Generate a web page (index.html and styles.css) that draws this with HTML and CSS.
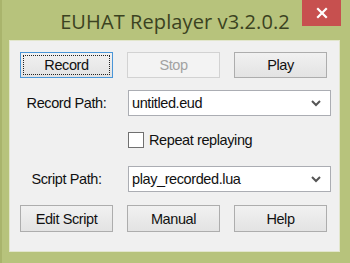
FILE: index.html
```html
<!DOCTYPE html>
<html>
<head>
<meta charset="utf-8">
<link rel="stylesheet" href="styles.css">
</head>
<body>
<div class="window">
  <div class="titlebar">
    <span class="title">EUHAT Replayer v3.2.0.2</span>
    <div class="close"><svg width="14" height="14" viewBox="0 0 14 14"><path d="M3 3 L11 11 M11 3 L3 11" stroke="#fff" stroke-width="2.2" stroke-linecap="square"/></svg></div>
  </div>
  <div class="client">
    <div class="row buttons top">
      <button class="btn focused"><span class="focus">Record</span></button>
      <button class="btn disabled">Stop</button>
      <button class="btn">Play</button>
    </div>
    <div class="row field">
      <span class="label">Record Path:</span>
      <div class="combo"><span>untitled.eud</span><svg width="10" height="7" viewBox="0 0 10 7"><path d="M1 1 L5 5 L9 1" fill="none" stroke="#555" stroke-width="2"/></svg></div>
    </div>
    <div class="row check">
      <span class="box"></span><span>Repeat replaying</span>
    </div>
    <div class="row field">
      <span class="label">Script Path:</span>
      <div class="combo"><span>play_recorded.lua</span><svg width="10" height="7" viewBox="0 0 10 7"><path d="M1 1 L5 5 L9 1" fill="none" stroke="#555" stroke-width="2"/></svg></div>
    </div>
    <div class="row buttons bottom">
      <button class="btn">Edit Script</button>
      <button class="btn">Manual</button>
      <button class="btn">Help</button>
    </div>
  </div>
</div>
</body>
</html>
```
FILE: styles.css
```css
* { box-sizing: border-box; }
html, body { margin: 0; padding: 0; }
body { width: 350px; height: 263px; overflow: hidden; background: #b6c27a; font-family: "Liberation Sans", Arial, sans-serif; }
.window { width: 350px; height: 263px; background: #b7c37c; border-left: 2px solid #a9b46c; position: relative; }
.titlebar { height: 40px; display: flex; justify-content: center; align-items: flex-start; padding-top: 8px; }
.title { font-family: "Open Sans", "Liberation Sans", sans-serif; font-size: 20px; color: #3b4221; letter-spacing: 0.1px; margin-left: -2px; line-height: 27px; }
.close { position: absolute; top: 0; right: 9px; width: 39px; height: 26px; background: #c7504f; display: flex; align-items: center; justify-content: center; }
.client { margin-left: 7px; width: 331px; height: 212px; background: #f0f0f0; border: 1px solid #e2e6cc; padding: 11px 0 0 10px; font-size: 14.5px; letter-spacing: -0.4px; color: #111; }
.row { display: flex; align-items: center; }
.buttons { gap: 14px; }
.btn { width: 93px; height: 26px; font: inherit; letter-spacing: inherit; color: #111; background: linear-gradient(#f1f1f1, #e3e3e3); border: 1px solid #adadad; padding: 0; display: flex; align-items: center; justify-content: center; }
.btn.focused { border-color: #4a96d8; padding: 2px; }
.focus { width: 100%; height: 100%; border: 1px dotted #222; display: flex; align-items: center; justify-content: center; }
.btn.disabled { color: #a2a2a2; border-color: #d2d2d2; background: #f3f3f3; }
.top { margin-bottom: 12px; }
.field { height: 26px; }
.label { width: 93px; text-align: center; margin-right: 15px; }
.combo { width: 203px; height: 26px; background: #fff; border: 1px solid #abadb3; display: flex; align-items: center; justify-content: space-between; padding: 0 9px 0 3px; }
.check { height: 50px; padding-left: 108px; padding-bottom: 2px; gap: 5px; }
.box { width: 16px; height: 16px; border: 1px solid #707070; background: #fff; }
.bottom { margin-top: 13px; }
.bottom .btn { height: 27px; }
```
